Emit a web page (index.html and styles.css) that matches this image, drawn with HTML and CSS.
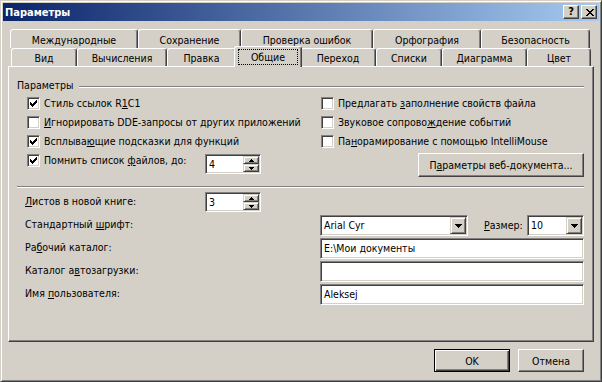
FILE: index.html
```html
<!DOCTYPE html>
<html lang="ru">
<head>
  <meta charset="UTF-8">
  <title>Параметры</title>
  <link rel="stylesheet" href="styles.css">
</head>
<body>
  <div class="window">
    <div class="titlebar">
      <span class="title">Параметры</span>
      <div class="caption-buttons">
        <button class="cap-btn help">?</button>
        <button class="cap-btn close">
          <svg width="8" height="7" viewBox="0 0 8 7" shape-rendering="crispEdges"><path d="M0 0h2v1h-2z M6 0h2v1h-2z M1 1h2v1h-2z M5 1h2v1h-2z M2 2h4v1h-4z M3 3h2v1h-2z M2 4h4v1h-4z M1 5h2v1h-2z M5 5h2v1h-2z M0 6h2v1h-2z M6 6h2v1h-2z"/></svg>
        </button>
      </div>
    </div>

    <!-- Вкладки: два ряда -->
    <div class="tabs">
      <div class="tab-row back">
        <div class="tab tab-intl">Международные</div>
        <div class="tab tab-save">Сохранение</div>
        <div class="tab tab-errors">Проверка ошибок</div>
        <div class="tab tab-spell">Орфография</div>
        <div class="tab tab-security">Безопасность</div>
      </div>
      <div class="tab-row front">
        <div class="tab tab-view">Вид</div>
        <div class="tab tab-calc">Вычисления</div>
        <div class="tab tab-edit">Правка</div>
        <div class="tab tab-general selected"><span class="focus">Общие</span></div>
        <div class="tab tab-transition">Переход</div>
        <div class="tab tab-lists">Списки</div>
        <div class="tab tab-chart">Диаграмма</div>
        <div class="tab tab-color">Цвет</div>
      </div>
    </div>

    <div class="panel">
      <div class="group-title">
        <span>Параметры</span>
        <div class="line"></div>
      </div>

      <div class="options">
        <div class="col">
          <div class="check-row">
            <span class="checkbox"><svg viewBox="0 0 7 7" shape-rendering="crispEdges"><path d="M6 0h1v1h-1z M5 1h2v1h-2z M0 2h1v1h-1z M4 2h3v1h-3z M0 3h2v1h-2z M3 3h3v1h-3z M0 4h5v1h-5z M1 5h3v1h-3z M2 6h1v1h-1z"/></svg></span>
            <span>Стиль ссылок R<u>1</u>C1</span>
          </div>
          <div class="check-row">
            <span class="checkbox"></span>
            <span><u>И</u>гнорировать DDE-запросы от других приложений</span>
          </div>
          <div class="check-row">
            <span class="checkbox"><svg viewBox="0 0 7 7" shape-rendering="crispEdges"><path d="M6 0h1v1h-1z M5 1h2v1h-2z M0 2h1v1h-1z M4 2h3v1h-3z M0 3h2v1h-2z M3 3h3v1h-3z M0 4h5v1h-5z M1 5h3v1h-3z M2 6h1v1h-1z"/></svg></span>
            <span>Всплыва<u>ю</u>щие подсказки для функций</span>
          </div>
          <div class="check-row tall">
            <span class="checkbox"><svg viewBox="0 0 7 7" shape-rendering="crispEdges"><path d="M6 0h1v1h-1z M5 1h2v1h-2z M0 2h1v1h-1z M4 2h3v1h-3z M0 3h2v1h-2z M3 3h3v1h-3z M0 4h5v1h-5z M1 5h3v1h-3z M2 6h1v1h-1z"/></svg></span>
            <span class="recent-label">Помнить список <u>ф</u>айлов, до:</span>
            <div class="spin recent-spin">
              <span class="spin-value">4</span>
              <div class="spin-buttons">
                <span class="spin-btn"><svg width="5" height="3" viewBox="0 0 5 3" shape-rendering="crispEdges"><path d="M2 0h1v1h1v1h1v1h-5v-1h1v-1h1z"/></svg></span>
                <span class="spin-btn"><svg width="5" height="3" viewBox="0 0 5 3" shape-rendering="crispEdges"><path d="M0 0h5v1h-1v1h-1v1h-1v-1h-1v-1h-1z"/></svg></span>
              </div>
            </div>
          </div>
        </div>

        <div class="col">
          <div class="check-row">
            <span class="checkbox"></span>
            <span>Предлагать <u>з</u>аполнение свойств файла</span>
          </div>
          <div class="check-row">
            <span class="checkbox"></span>
            <span>Звуковое сопрово<u>ж</u>дение событий</span>
          </div>
          <div class="check-row">
            <span class="checkbox"></span>
            <span>Па<u>н</u>орамирование с помощью IntelliMouse</span>
          </div>
          <button class="push-btn web-btn">П<u>а</u>раметры веб-документа...</button>
        </div>
      </div>

      <div class="separator"></div>

      <div class="settings">
        <div class="setting-row">
          <span class="label short"><u>Л</u>истов в новой книге:</span>
          <div class="spin">
            <span class="spin-value">3</span>
            <div class="spin-buttons">
              <span class="spin-btn"><svg width="5" height="3" viewBox="0 0 5 3" shape-rendering="crispEdges"><path d="M2 0h1v1h1v1h1v1h-5v-1h1v-1h1z"/></svg></span>
              <span class="spin-btn"><svg width="5" height="3" viewBox="0 0 5 3" shape-rendering="crispEdges"><path d="M0 0h5v1h-1v1h-1v1h-1v-1h-1v-1h-1z"/></svg></span>
            </div>
          </div>
        </div>
        <div class="setting-row">
          <span class="label">Стандартный <u>ш</u>рифт:</span>
          <div class="font-fields">
            <div class="combo font-combo">
              <span class="combo-value">Arial Cyr</span>
              <span class="combo-btn"><svg width="7" height="4" viewBox="0 0 7 4" shape-rendering="crispEdges"><path d="M0 0h7v1h-1v1h-1v1h-1v1h-1v-1h-1v-1h-1v-1h-1z"/></svg></span>
            </div>
            <span class="size-label"><u>Р</u>азмер:</span>
            <div class="combo size-combo">
              <span class="combo-value">10</span>
              <span class="combo-btn"><svg width="7" height="4" viewBox="0 0 7 4" shape-rendering="crispEdges"><path d="M0 0h7v1h-1v1h-1v1h-1v1h-1v-1h-1v-1h-1v-1h-1z"/></svg></span>
            </div>
          </div>
        </div>
        <div class="setting-row">
          <span class="label">Ра<u>б</u>очий каталог:</span>
          <div class="field">E:\Мои документы</div>
        </div>
        <div class="setting-row">
          <span class="label">Каталог а<u>в</u>тозагрузки:</span>
          <div class="field"></div>
        </div>
        <div class="setting-row">
          <span class="label">Имя <u>п</u>ользователя:</span>
          <div class="field">Aleksej</div>
        </div>
      </div>
    </div>

    <div class="footer">
      <button class="push-btn default ok-btn">OK</button>
      <button class="push-btn cancel-btn">Отмена</button>
    </div>
  </div>
</body>
</html>
```
FILE: styles.css
```css
body {
  margin: 0;
  background-color: #d4d0c8;
  font-family: "DejaVu Sans Condensed", "DejaVu Sans", sans-serif;
  font-size: 10.5px;
  color: #000;
}
u {
  text-underline-offset: 1px;
}
.window {
  width: 602px;
  height: 382px;
  box-sizing: border-box;
  border: 1px solid;
  border-color: #d4d0c8 #404040 #404040 #d4d0c8;
  box-shadow: inset 1px 1px #fff, inset -1px -1px #808080;
  padding: 2px;
  background-color: #d4d0c8;
}

/* Заголовок окна */
.titlebar {
  height: 18px;
  display: flex;
  align-items: center;
  padding: 0 2px;
  background: linear-gradient(to right, #0a246a, #a6caf0);
  color: #fff;
}
.title {
  flex: 1;
  font-weight: bold;
  font-size: 11px;
}
.caption-buttons {
  display: flex;
  gap: 2px;
}
.cap-btn {
  width: 16px;
  height: 14px;
  box-sizing: border-box;
  padding: 0;
  border: 1px solid;
  border-color: #fff #404040 #404040 #fff;
  box-shadow: inset -1px -1px #808080;
  background-color: #d4d0c8;
  display: flex;
  align-items: center;
  justify-content: center;
  font-family: inherit;
  font-weight: bold;
  font-size: 11px;
  line-height: 12px;
  color: #000;
}
.cap-btn.close svg {
  margin-left: 1px;
}

/* Вкладки */
.tabs {
  margin-top: 8px;
}
.tab-row {
  display: flex;
  align-items: flex-start;
}
.tab-row.back {
  height: 19px;
  padding-left: 7px;
}
.tab-row.front {
  height: 18px;
  padding-left: 8px;
  position: relative;
  z-index: 1;
}
.tab {
  box-sizing: border-box;
  flex: none;
  border: 1px solid;
  border-bottom: 0;
  border-color: #fff #404040 transparent #fff;
  border-radius: 3px 3px 0 0;
  box-shadow: inset -1px 0 #808080;
  background-color: #d4d0c8;
  text-align: center;
  white-space: nowrap;
}
.tab-row.back .tab {
  height: 19px;
  line-height: 21px;
}
.tab-row.front .tab {
  height: 18px;
  line-height: 18px;
}
.tab-row.front .tab.selected {
  height: 21px;
  margin: -2px -2px -1px;
  padding-top: 1px;
  line-height: 14px;
  position: relative;
  z-index: 2;
}
.focus {
  display: inline-block;
  box-sizing: border-box;
  width: 60px;
  margin-top: 1px;
  border: 1px dotted #000;
  line-height: 14px;
}
.tab-intl { width: 128px; }
.tab-save { width: 103px; }
.tab-errors { width: 132px; }
.tab-spell { width: 108px; }
.tab-security { width: 109px; }
.tab-view { width: 66px; }
.tab-calc { width: 90px; }
.tab-edit { width: 69px; }
.tab-general { width: 68px; }
.tab-transition { width: 76px; }
.tab-lists { width: 66px; }
.tab-chart { width: 85px; }
.tab-color { width: 64px; }

/* Панель вкладки "Общие" */
.panel {
  box-sizing: border-box;
  width: 586px;
  height: 276px;
  margin-left: 5px;
  border: 1px solid;
  border-color: #fff #404040 #404040 #fff;
  box-shadow: inset -1px -1px #808080;
  padding: 11px 9px 0 8px;
}
.group-title {
  display: flex;
  align-items: center;
  height: 14px;
}
.group-title .line {
  flex: 1;
  margin: 4px 0 0 5px;
  border-top: 1px solid #808080;
  border-bottom: 1px solid #fff;
}
.options {
  display: grid;
  grid-template-columns: 294px 1fr;
  margin: 2px 0 0 10px;
}
.col {
  display: flex;
  flex-direction: column;
}
.check-row {
  display: flex;
  align-items: flex-start;
  gap: 4px;
  height: 19px;
  line-height: 19px;
  white-space: nowrap;
}
.check-row.tall {
  height: 23px;
}
.checkbox {
  flex: none;
  width: 13px;
  height: 13px;
  box-sizing: border-box;
  margin-top: 3px;
  border: 1px solid;
  border-color: #808080 #fff #fff #808080;
  box-shadow: inset 1px 1px #404040, inset -1px -1px #d4d0c8;
  background-color: #fff;
  display: flex;
  align-items: center;
  justify-content: center;
}
.checkbox svg {
  width: 7px;
  height: 7px;
}
.recent-label {
  width: 157px;
}
.recent-spin {
  margin-top: 3px;
}

/* Поля ввода */
.spin,
.combo,
.field {
  box-sizing: border-box;
  border: 1px solid;
  border-color: #808080 #fff #fff #808080;
  box-shadow: inset 1px 1px #404040, inset -1px -1px #d4d0c8;
  background-color: #fff;
  padding: 1px;
}
.spin {
  display: flex;
  width: 56px;
  height: 20px;
}
.spin-value {
  flex: 1;
  padding-left: 2px;
  line-height: 16px;
}
.spin-buttons {
  display: flex;
  flex-direction: column;
  width: 16px;
}
.spin-btn,
.combo-btn {
  box-sizing: border-box;
  border: 1px solid;
  border-color: #d4d0c8 #404040 #404040 #d4d0c8;
  box-shadow: inset 1px 1px #fff, inset -1px -1px #808080;
  background-color: #d4d0c8;
  display: flex;
  align-items: center;
  justify-content: center;
}
.spin-btn {
  height: 8px;
}
.combo {
  display: flex;
  height: 21px;
}
.combo-value {
  flex: 1;
  padding-left: 2px;
  line-height: 17px;
}
.combo-btn {
  width: 16px;
}
.field {
  flex: 1;
  height: 21px;
  padding-left: 3px;
  line-height: 17px;
}

/* Кнопки */
.push-btn {
  box-sizing: border-box;
  border: 1px solid;
  border-color: #fff #404040 #404040 #fff;
  box-shadow: inset -1px -1px #808080;
  background-color: #d4d0c8;
  font-family: inherit;
  font-size: 10.5px;
  color: #000;
  padding: 0;
}
.push-btn.default {
  border-color: #000;
  box-shadow: inset 1px 1px #fff, inset -1px -1px #404040, inset -2px -2px #808080;
}
.web-btn {
  align-self: flex-end;
  width: 166px;
  height: 24px;
  margin-top: 2px;
}

.separator {
  margin-top: 9px;
  border-top: 1px solid #808080;
  border-bottom: 1px solid #fff;
}
.settings {
  display: flex;
  flex-direction: column;
  gap: 2px;
  margin: 4px 0 0 8px;
}
.setting-row {
  display: flex;
  align-items: flex-start;
  height: 21px;
}
.setting-row .label {
  flex: none;
  width: 295px;
  line-height: 18px;
  white-space: nowrap;
}
.setting-row .label.short {
  width: 180px;
}
.font-fields {
  flex: 1;
  display: flex;
  align-items: flex-start;
}
.font-combo {
  width: 148px;
}
.size-label {
  margin-left: 16px;
  line-height: 20px;
}
.size-combo {
  width: 57px;
  margin-left: auto;
}

.footer {
  display: flex;
  justify-content: flex-end;
  gap: 8px;
  margin-top: 7px;
  padding-right: 15px;
}
.ok-btn {
  width: 76px;
  height: 23px;
}
.cancel-btn {
  width: 66px;
  height: 23px;
}
```
